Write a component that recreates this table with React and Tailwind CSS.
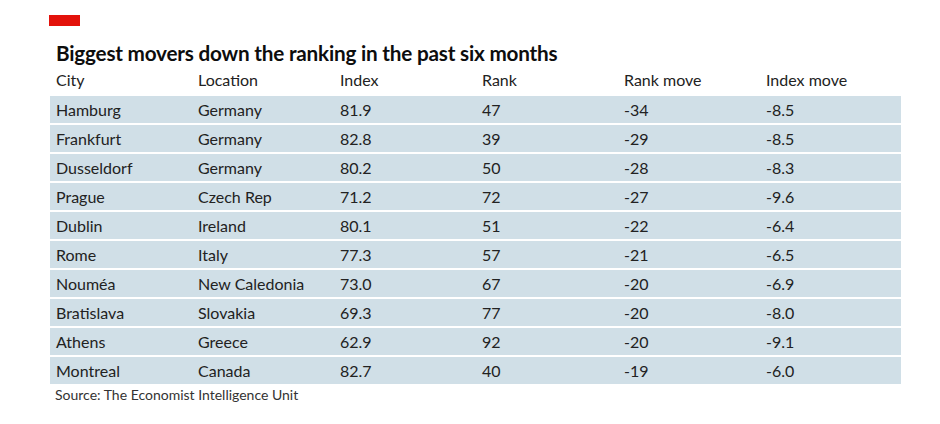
export default function App() {
  const rows = [
    ["Hamburg", "Germany", "81.9", "47", "-34", "-8.5"],
    ["Frankfurt", "Germany", "82.8", "39", "-29", "-8.5"],
    ["Dusseldorf", "Germany", "80.2", "50", "-28", "-8.3"],
    ["Prague", "Czech Rep", "71.2", "72", "-27", "-9.6"],
    ["Dublin", "Ireland", "80.1", "51", "-22", "-6.4"],
    ["Rome", "Italy", "77.3", "57", "-21", "-6.5"],
    ["Nouméa", "New Caledonia", "73.0", "67", "-20", "-6.9"],
    ["Bratislava", "Slovakia", "69.3", "77", "-20", "-8.0"],
    ["Athens", "Greece", "62.9", "92", "-20", "-9.1"],
    ["Montreal", "Canada", "82.7", "40", "-19", "-6.0"],
  ];
  const headers = ["City", "Location", "Index", "Rank", "Rank move", "Index move"];
  return (
    <div className="w-[940px] h-[424px] bg-white text-[#222] font-['Lato',sans-serif] pl-[50px] pt-[15px]">
      <div className="w-[31px] h-[11px] bg-[#e3120b] -ml-px" />
      <div className="mt-[14px] ml-[6px] text-[20.7px] font-bold leading-[26px] text-[#0d0d0d] tracking-[-0.2px]">
        Biggest movers down the ranking in the past six months
      </div>
      <div className="w-[851px]">
        <div className="grid grid-cols-[142px_142px_142px_142px_142px_141px] pl-[6px] h-[28px] items-center text-[16px]">
          {headers.map((h) => (
            <div key={h}>{h}</div>
          ))}
        </div>
        <div className="flex flex-col gap-[2px] mt-[2px]">
          {rows.map((r) => (
            <div
              key={r[0]}
              className="grid grid-cols-[142px_142px_142px_142px_142px_141px] pl-[6px] h-[27px] items-center bg-[#d0dfe7] text-[16px]"
            >
              {r.map((c, i) => (
                <div key={i}>{c}</div>
              ))}
            </div>
          ))}
        </div>
        <div className="pl-[5px] mt-[1px] text-[14px] leading-[20px] text-[#333]">
          Source: The Economist Intelligence Unit
        </div>
      </div>
    </div>
  );
}
